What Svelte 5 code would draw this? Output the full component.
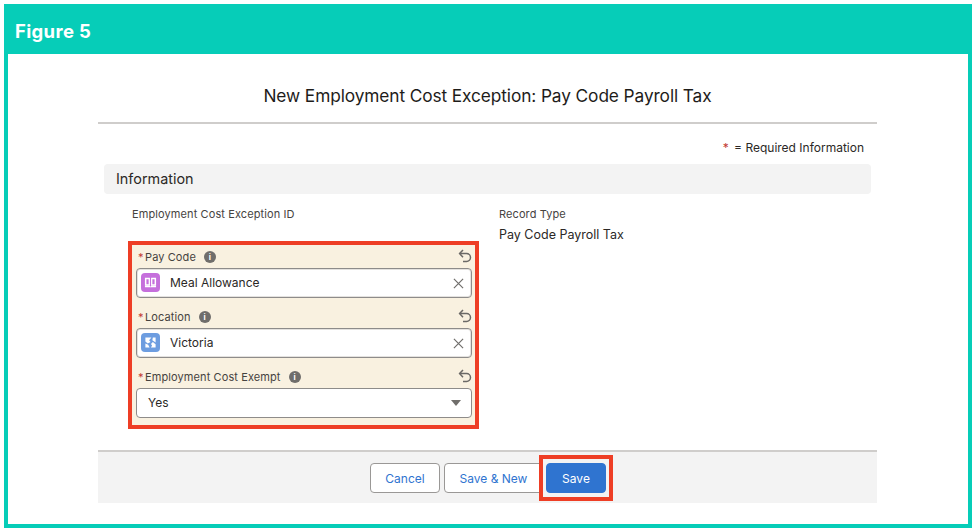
<script>
  const fields = [
    { label: 'Pay Code', value: 'Meal Allowance', icon: 'book' },
    { label: 'Location', value: 'Victoria', icon: 'map' },
    { label: 'Employment Cost Exempt', value: 'Yes', icon: null }
  ];
</script>

<div class="figure">
  <header class="fig-head">Figure 5</header>
  <div class="fig-body">
    <div class="record">
      <h2 class="title">New Employment Cost Exception: Pay Code Payroll Tax</h2>
      <p class="required"><span class="star">*</span> = Required Information</p>
      <div class="section">Information</div>

      <div class="columns">
        <div class="col-left">
          <div class="plain-label">Employment Cost Exception ID</div>
          <div class="highlight">
            {#each fields as f}
              <div class="field">
                <div class="field-label">
                  <span class="req">*</span>
                  <span>{f.label}</span>
                  <span class="info">i</span>
                  <svg class="undo" viewBox="0 0 14 14" width="14" height="14" fill="none" stroke="#6b6966" stroke-width="1.5">
                    <path d="M1.6 4.6h7a3.8 3.8 0 0 1 0 7.8H5" />
                    <path d="M5 1 1.6 4.6 5 8.2" />
                  </svg>
                </div>
                <div class="input" class:select={!f.icon}>
                  {#if f.icon === 'book'}
                    <span class="obj purple">
                      <svg viewBox="0 0 14 14" width="13" height="13" fill="#fff">
                        <path d="M1 2h5.4v8.6H1zM7.6 2H13v8.6H7.6z" />
                        <path d="M1 10.6h5.2l.8.9.8-.9H13V12H1z" />
                        <path d="M2.6 3.6H5v5.4H2.6zM9 3.6h2.4v5.4H9z" fill="#c56fdc" />
                      </svg>
                    </span>
                  {:else if f.icon === 'map'}
                    <span class="obj blue">
                      <svg viewBox="0 0 14 14" width="13" height="13" fill="#fff">
                        <path d="M1.5 1.5H8L5.5 4.5 7 6.5 4 8 1.5 6zM9.5 1.5h3V7L9 4.5zM1.5 8l3 1.5 1.5 3H1.5zM7.5 8.5l2-2 3 2.5v3.5H7.5l1.2-2.2z" />
                      </svg>
                    </span>
                  {/if}
                  <span class="value">{f.value}</span>
                  {#if f.icon}
                    <svg class="clear" viewBox="0 0 12 12" width="11" height="11" stroke="#706e6b" stroke-width="1.3">
                      <path d="M1 1l10 10M11 1 1 11" />
                    </svg>
                  {:else}
                    <span class="caret"></span>
                  {/if}
                </div>
              </div>
            {/each}
          </div>
        </div>
        <div class="col-right">
          <div class="plain-label">Record Type</div>
          <div class="plain-value">Pay Code Payroll Tax</div>
        </div>
      </div>

      <footer class="actions">
        <button class="btn">Cancel</button>
        <button class="btn wide">Save &amp; New</button>
        <span class="save-mark"><button class="btn brand">Save</button></span>
      </footer>
    </div>
  </div>
</div>

<style>
  :global(body) {
    margin: 0;
    background: #fff;
    font-family: Inter, "Liberation Sans", sans-serif;
    color: #2b2826;
  }
  .figure {
    width: 968px;
    height: 524px;
    margin: 4px;
    box-sizing: border-box;
    border: 4px solid #06cdb8;
    border-top: 0;
    display: flex;
    flex-direction: column;
  }
  .fig-head {
    height: 50px;
    margin: 0 -4px;
    padding: 0 11px;
    background: #06cdb8;
    color: #fff;
    font-size: 18.5px;
    font-weight: 700;
    letter-spacing: 0.35px;
    line-height: 55px;
    box-sizing: border-box;
  }
  .fig-body {
    flex: 1;
    background: #fff;
    padding-left: 90px;
  }
  .record {
    width: 779px;
    height: 449px;
    display: flex;
    flex-direction: column;
  }
  .title {
    margin: 0;
    height: 70px;
    line-height: 84px;
    box-sizing: border-box;
    border-bottom: 2px solid #cfcdcb;
    text-align: center;
    font-size: 17.3px;
    font-weight: 400;
    letter-spacing: -0.1px;
    color: #1e1c1a;
  }
  .required {
    margin: 0;
    height: 40px;
    padding: 16px 13px 0 0;
    box-sizing: border-box;
    text-align: right;
    font-size: 12px;
    line-height: 16px;
  }
  .star { color: #c23934; margin-right: 2px; }
  .section {
    margin: 0 6px;
    height: 30px;
    padding-left: 12px;
    background: #f3f3f3;
    border-radius: 4px;
    font-size: 14.4px;
    line-height: 30px;
  }
  .columns {
    display: flex;
    flex: 1;
    padding: 12px 0 0 34px;
  }
  .col-left { width: 367px; }
  .plain-label {
    font-size: 11px;
    line-height: 16px;
    color: #46433f;
    letter-spacing: 0.1px;
  }
  .plain-value {
    margin-top: 3px;
    font-size: 12.5px;
    line-height: 20px;
  }
  .highlight {
    box-sizing: border-box;
    width: 351px;
    height: 188px;
    margin: 19px 0 0 -4px;
    padding: 1px 3px 0 4px;
    border: 4px solid #ee3e25;
    background: #f9f1e0;
  }
  .field { height: 60px; }
  .field-label {
    display: flex;
    align-items: center;
    height: 22px;
    box-sizing: border-box;
    padding: 1px 0 1px 2px;
    font-size: 11px;
    letter-spacing: 0.1px;
    color: #46433f;
  }
  .req { color: #c23934; width: 7px; }
  .info {
    width: 12px;
    height: 12px;
    margin-left: 8px;
    border-radius: 50%;
    background: #706e6b;
    color: #fff;
    font-size: 8px;
    font-weight: 700;
    line-height: 12px;
    text-align: center;
  }
  .undo { margin-left: auto; margin-top: -3px; }
  .input {
    display: flex;
    align-items: center;
    height: 30px;
    box-sizing: border-box;
    padding: 0 7px 0 4px;
    background: #fff;
    border: 1px solid #8e8c8a;
    border-radius: 4px;
    box-shadow: inset 0 0 0 1px #e4e2df;
    font-size: 12px;
  }
  .input.select {
    padding-left: 11px;
    box-shadow: none;
  }
  .obj {
    width: 19px;
    height: 19px;
    margin: 0 10px 1px 0;
    border-radius: 4px;
    display: flex;
    align-items: center;
    justify-content: center;
  }
  .purple { background: #c56fdc; }
  .blue { background: #6d9de0; }
  .value { flex: 1; padding-bottom: 1px; }
  .clear { margin-right: 0; }
  .caret {
    width: 0;
    height: 0;
    margin-right: 3px;
    border-left: 5.5px solid transparent;
    border-right: 5.5px solid transparent;
    border-top: 6px solid #706e6b;
  }
  .actions {
    height: 53px;
    box-sizing: border-box;
    border-top: 2px solid #cfcdcb;
    background: #f3f3f3;
    display: flex;
    align-items: center;
    justify-content: flex-start;
    padding-left: 272px;
    gap: 4px;
  }
  .btn {
    height: 30px;
    width: 70px;
    padding: 1px 0 0;
    border: 1px solid #9a9896;
    border-radius: 4px;
    background: #fff;
    color: #2f74d0;
    font: inherit;
    font-size: 12px;
  }
  .btn.wide { width: 99px; }
  .btn.brand {
    width: 60px;
    border-color: #2f74d0;
    background: #2f74d0;
    color: #fff;
    display: block;
  }
  .save-mark {
    margin-left: -8px;
    padding: 4px 3px;
    border: 4px solid #ee3e25;
    background: #f3f3f3;
    position: relative;
  }
</style>
